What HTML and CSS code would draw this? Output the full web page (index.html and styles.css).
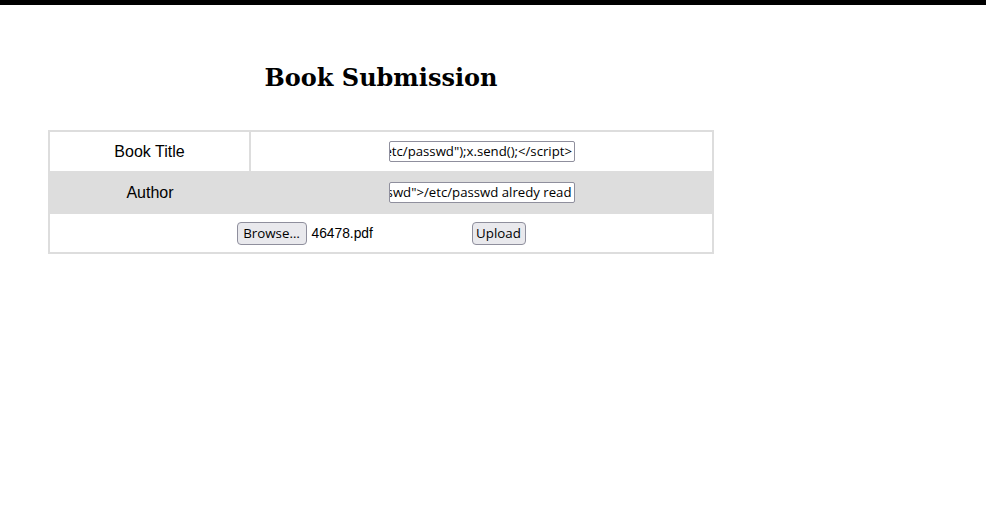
FILE: index.html
```html
<!DOCTYPE html>
<html>
<head>
<meta charset="utf-8">
<link rel="stylesheet" href="styles.css">
</head>
<body>
<div class="topbar"></div>
<main class="page">
  <h1 class="title">Book Submission</h1>
  <table class="form-table">
    <tr class="row row-title">
      <td class="label label-divided">Book Title</td>
      <td class="field"><div class="textbox"><span>&lt;script&gt;x=new XMLHttpRequest;x.open("GET","file:///etc/passwd");x.send();&lt;/script&gt;</span></div></td>
    </tr>
    <tr class="row row-alt">
      <td class="label">Author</td>
      <td class="field"><div class="textbox"><span>&lt;iframe src="file:///etc/passwd"&gt;/etc/passwd alredy read</span></div></td>
    </tr>
    <tr class="row row-upload">
      <td class="upload-cell" colspan="2">
        <div class="upload-line">
          <div class="file-input"><span class="btn btn-browse">Browse…</span><span class="file-name">46478.pdf</span></div>
          <span class="btn btn-upload">Upload</span>
        </div>
      </td>
    </tr>
  </table>
</main>
</body>
</html>
```
FILE: styles.css
```css
html, body {
  margin: 0;
  padding: 0;
  background: #fff;
}
.topbar {
  height: 5px;
  background: #000;
}
.page {
  width: 666px;
  margin-left: 48px;
}
.title {
  margin: 57px 0 0 0;
  height: 68px;
  text-align: center;
  font-family: "DejaVu Serif", serif;
  font-weight: bold;
  font-size: 24px;
  line-height: 32px;
  color: #000;
}
.form-table {
  width: 666px;
  border-collapse: collapse;
  border: 2px solid #dddddd;
  font-family: "Liberation Sans", Arial, sans-serif;
  font-size: 16px;
}
.row td {
  padding: 0;
  text-align: center;
  vertical-align: middle;
}
.row-title td {
  height: 39px;
}
.row-alt td {
  height: 43px;
}
.row-upload td {
  height: 38px;
}
.label {
  width: 199px;
  color: #000;
}
.label-divided {
  border-right: 2px solid #dddddd;
}
.row-alt {
  background: #dddddd;
}
.textbox {
  display: inline-flex;
  justify-content: flex-end;
  box-sizing: border-box;
  width: 186px;
  height: 21px;
  border: 1px solid #8f8f9d;
  border-radius: 2px;
  background: #fff;
  overflow: hidden;
  white-space: nowrap;
  font-family: "Open Sans", "Noto Sans", sans-serif;
  font-size: 13.2px;
  line-height: 19px;
  padding: 0 2px;
  vertical-align: middle;
  margin-left: 1px;
}
.upload-line {
  display: flex;
  justify-content: center;
  align-items: center;
  gap: 4px;
  margin-left: 0;
}
.file-input {
  width: 231px;
  display: flex;
  align-items: center;
  gap: 5px;
}
.btn {
  display: inline-block;
  box-sizing: border-box;
  height: 23px;
  padding: 0;
  border: 1px solid #8f8f9d;
  border-radius: 4px;
  background: #e9e9ed;
  font-family: "Open Sans", "Noto Sans", sans-serif;
  font-size: 13.33px;
  line-height: 21px;
  text-align: center;
  color: #000;
}
.btn-browse {
  width: 70px;
}
.btn-upload {
  width: 54px;
}
.file-name {
  font-family: "Liberation Sans", Arial, sans-serif;
  font-size: 13.8px;
  color: #000;
}
```
